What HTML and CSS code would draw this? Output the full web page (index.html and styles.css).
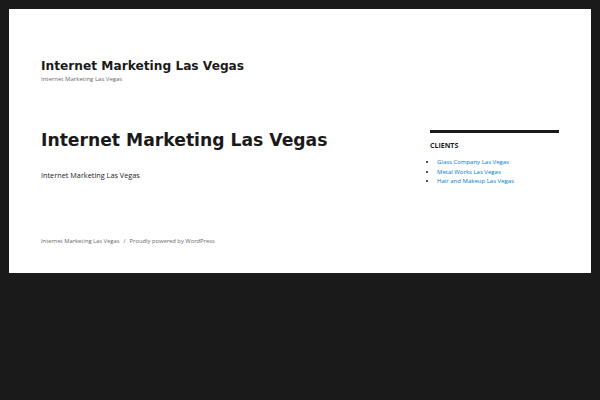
FILE: index.html
```html
<!DOCTYPE html>
<html>
<head>
<meta charset="utf-8">
<link rel="stylesheet" href="styles.css">
</head>
<body>
<div class="site">
  <header class="site-header">
    <p class="site-title">Internet Marketing Las Vegas</p>
    <p class="site-description">Internet Marketing Las Vegas</p>
  </header>
  <div class="content">
    <main class="main">
      <h1 class="entry-title">Internet Marketing Las Vegas</h1>
      <p class="entry-content">Internet Marketing Las Vegas</p>
    </main>
    <aside class="sidebar">
      <h2 class="widget-title">CLIENTS</h2>
      <ul class="links">
        <li><a href="#">Glass Company Las Vegas</a></li>
        <li><a href="#">Metal Works Las Vegas</a></li>
        <li><a href="#">Hair and Makeup Las Vegas</a></li>
      </ul>
    </aside>
  </div>
  <footer class="site-footer">
    <span>Internet Marketing Las Vegas</span><span class="sep">/</span><span>Proudly powered by WordPress</span>
  </footer>
</div>
</body>
</html>
```
FILE: styles.css
```css
html, body { margin: 0; padding: 0; }
body {
  background: #1a1a1a;
  padding: 9px;
  font-family: "DejaVu Sans", sans-serif;
  color: #1a1a1a;
}
.site {
  background: #fff;
  height: 264px;
  box-sizing: border-box;
  padding: 0 32px;
}
.site-header { padding-top: 49px; }
.site-title {
  margin: 0;
  font-weight: bold;
  font-size: 12.2px;
  line-height: 17px;
}
.site-description {
  margin: 0;
  font-family: "Open Sans", sans-serif;
  font-size: 6px;
  line-height: 9px;
  color: #686868;
}
.content {
  display: flex;
  align-items: flex-start;
  justify-content: space-between;
  margin-top: 43px;
}
.entry-title {
  margin: 0;
  font-size: 17.2px;
  line-height: 26px;
  font-weight: bold;
}
.entry-content {
  margin: 16px 0 0;
  font-family: "Open Sans", sans-serif;
  font-size: 7.3px;
  line-height: 12px;
  color: #1a1a1a;
}
.sidebar {
  width: 129px;
  margin-top: 3px;
  border-top: 3px solid #1a1a1a;
  padding-top: 8px;
}
.widget-title {
  margin: 0;
  font-family: "Open Sans", sans-serif;
  font-size: 7px;
  font-weight: 700;
  line-height: 10px;
}
.links {
  margin: 7px 0 0;
  padding: 0 0 0 7px;
  font-family: "Open Sans", sans-serif;
  font-size: 6px;
  line-height: 9.5px;
}
.links a { color: #007acc; text-decoration: none; }
.site-footer {
  margin-top: 50px;
  font-family: "Open Sans", sans-serif;
  font-size: 5.8px;
  line-height: 9px;
  color: #686868;
}
.sep { margin: 0 4px; }
```
